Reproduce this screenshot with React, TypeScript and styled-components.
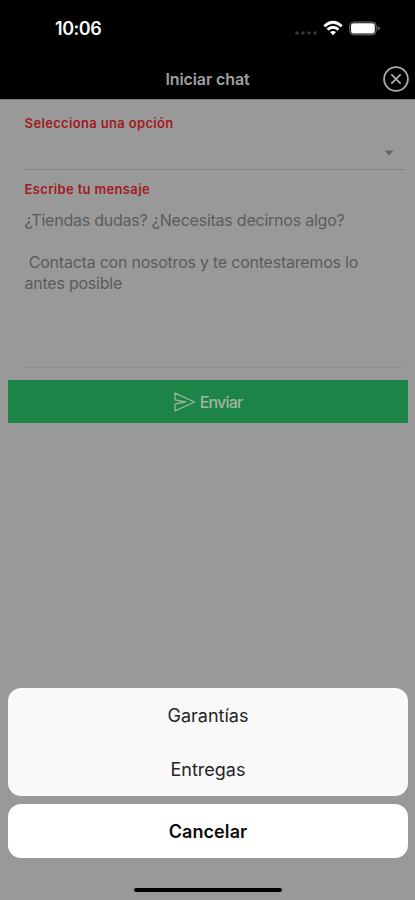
import React from "react";
import styled, { createGlobalStyle } from "styled-components";

const GlobalStyle = createGlobalStyle`
  * { box-sizing: border-box; }
  body { margin: 0; background: #999; font-family: Inter, "Liberation Sans", sans-serif; }
  button { font-family: inherit; border: 0; margin: 0; padding: 0; }
`;

const Screen = styled.div`
  width: 415px;
  height: 900px;
  display: flex;
  flex-direction: column;
  overflow: hidden;
  background: #999;
`;

const StatusBar = styled.div`
  height: 57px;
  flex: none;
  display: flex;
  justify-content: space-between;
  padding: 18px 34px 0 55px;
  background: #000;
`;

const Clock = styled.span`
  color: #f8f8f8;
  font-size: 18px;
  line-height: 22px;
  font-weight: 600;
  letter-spacing: -0.45px;
`;

const StatusIcons = styled.div`
  height: 22px;
  display: flex;
  align-items: flex-start;
`;

const Header = styled.header`
  height: 43px;
  flex: none;
  display: grid;
  grid-template-columns: 40px 1fr 40px;
  align-items: center;
  background: #000;
  border-bottom: 1px solid #7b7b7b;
`;

const Title = styled.h1`
  grid-column: 2;
  margin: 2px 0 0;
  text-align: center;
  color: #a0a0a0;
  font-size: 16px;
  line-height: 20px;
  font-weight: 600;
  letter-spacing: -0.1px;
`;

const CloseButton = styled.button`
  width: 28px;
  height: 28px;
  margin-left: 2px;
  margin-top: 1px;
  justify-self: center;
  background: none;
  svg { display: block; }
`;

const Field = styled.section<{ $height: number; $line: string }>`
  height: ${(p) => p.$height}px;
  flex: none;
  margin: 0 10px 0 24px;
  border-bottom: 1px solid ${(p) => p.$line};
`;

const Label = styled.label`
  display: block;
  padding-left: 0.6px;
  color: #a11a20;
  font-size: 13px;
  line-height: 16px;
  font-weight: 600;
  letter-spacing: 0.34px;
`;

const SelectField = styled(Field)`
  padding-top: 15px;
`;

const MessageField = styled(Field)`
  padding-top: 11px;
`;

const SelectValue = styled.div`
  height: 40px;
  display: flex;
  align-items: center;
  justify-content: flex-end;
  padding: 4px 11px 0 0;
`;

const Placeholder = styled.p`
  margin: 12.500px 0 0;
  padding-left: 0.5px;
  color: #5c5c5c;
  font-size: 16px;
  line-height: 21.3px;
  letter-spacing: -0.23px;
  white-space: pre;
`;

const SendButton = styled.button`
  height: 43px;
  flex: none;
  margin: 12px 7px 0 8px;
  display: flex;
  align-items: center;
  justify-content: center;
  gap: 4px;
  background: #1c8446;
  color: #a1b5a2;
  font-size: 16px;
  font-weight: 500;
  letter-spacing: -0.8px;
`;

const Sheet = styled.div`
  flex: none;
  margin: auto 7px 0 8px;
  display: flex;
  flex-direction: column;
  gap: 8px;
`;

const OptionGroup = styled.div`
  height: 108px;
  display: flex;
  flex-direction: column;
  overflow: hidden;
  border-radius: 13px;
  background: #f9f9f9;
`;

const Option = styled.button`
  flex: 1;
  padding-top: 1px;
  background: transparent;
  color: #262626;
  font-size: 18px;
  font-weight: 400;
  & + & { padding-top: 0; border-top: 1px solid #f5f5f5; }
`;

const CancelButton = styled.button`
  height: 54px;
  border-radius: 13px;
  background: #fff;
  color: #0c0c0c;
  font-size: 18px;
  font-weight: 600;
  letter-spacing: 0.08px;
`;

const HomeIndicator = styled.div`
  width: 148px;
  height: 4px;
  flex: none;
  margin: 30px auto 8px;
  border-radius: 3px;
  background: #000;
`;

const StatusGlyphs = () => (
  <svg width="86" height="22" viewBox="0 0 86 22" fill="none">
    <g fill="#383838">
      <circle cx="2" cy="15" r="1.8" />
      <circle cx="8" cy="15" r="1.8" />
      <circle cx="14" cy="15" r="1.8" />
      <circle cx="20" cy="15" r="1.8" />
    </g>
    <g stroke="#fff" strokeWidth="2.9">
      <path d="M29.3 8.2Q38 .3 46.7 8.2" />
      <path d="M32.5 11.7Q38 7 43.5 11.7" />
    </g>
    <path d="M35 14Q38 11.8 41 14L38 17.2Z" fill="#fff" />
    <rect x="54.7" y="4" width="26.5" height="12.8" rx="4" stroke="#777" />
    <rect x="56" y="5.3" width="23.8" height="10.2" rx="2.8" fill="#fff" />
    <path d="M82.7 8.2Q84.7 8.8 84.7 10.3T82.7 12.4Z" fill="#777" />
  </svg>
);

const CloseIcon = () => (
  <svg width="28" height="28" viewBox="0 0 28 28" fill="none" stroke="#aaa" strokeWidth="1.8">
    <circle cx="14" cy="14" r="11.9" />
    <path d="M9.3 9.3 18.7 18.7M18.7 9.3 9.3 18.7" />
  </svg>
);

const SendIcon = () => (
  <svg width="22" height="20" viewBox="0 0 22 20" fill="none" stroke="#9fb49f" strokeWidth="1.3">
    <path d="M1 1.200 20.500 10 1 18.800V12.200L11.500 10 1 7.800Z" strokeLinejoin="round" />
  </svg>
);

export default function App() {
  return (
    <>
      <GlobalStyle />
      <Screen>
        <StatusBar>
          <Clock>10:06</Clock>
          <StatusIcons><StatusGlyphs /></StatusIcons>
        </StatusBar>
        <Header>
          <Title>Iniciar chat</Title>
          <CloseButton aria-label="Cerrar"><CloseIcon /></CloseButton>
        </Header>
        <SelectField $height={70} $line="#858585">
          <Label>Selecciona una opción</Label>
          <SelectValue>
            <svg width="10" height="6" viewBox="0 0 10 6"><path d="M.5.500H9.500L5 5.500Z" fill="#626262" /></svg>
          </SelectValue>
        </SelectField>
        <MessageField $height={198} $line="#919191">
          <Label>Escribe tu mensaje</Label>
          <Placeholder>{"¿Tiendas dudas? ¿Necesitas decirnos algo?\n\n Contacta con nosotros y te contestaremos lo\nantes posible"}</Placeholder>
        </MessageField>
        <SendButton><SendIcon />Enviar</SendButton>
        <Sheet>
          <OptionGroup>
            <Option>Garantías</Option>
            <Option>Entregas</Option>
          </OptionGroup>
          <CancelButton>Cancelar</CancelButton>
        </Sheet>
        <HomeIndicator />
      </Screen>
    </>
  );
}
